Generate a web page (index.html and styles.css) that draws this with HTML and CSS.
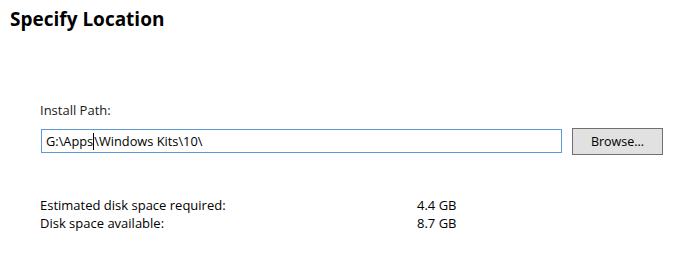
FILE: index.html
```html
<!DOCTYPE html>
<html>
<head>
<meta charset="utf-8">
<link rel="stylesheet" href="styles.css">
</head>
<body>
<div class="page">
  <h1 class="title">Specify Location</h1>
  <div class="content">
    <div class="label">Install Path:</div>
    <div class="path-row">
      <div class="path-input">G:\Apps<span class="caret"></span>\Windows Kits\10\</div>
      <div class="browse">Browse...</div>
    </div>
    <div class="space">
      <div class="space-row"><span class="space-name">Estimated disk space required:</span><span class="space-val">4.4 GB</span></div>
      <div class="space-row"><span class="space-name">Disk space available:</span><span class="space-val">8.7 GB</span></div>
    </div>
  </div>
</div>
</body>
</html>
```
FILE: styles.css
```css
html, body {
  margin: 0;
  padding: 0;
  background: #ffffff;
}
body {
  width: 685px;
  height: 260px;
  overflow: hidden;
  font-family: "Open Sans", "Noto Sans", sans-serif;
  color: #000;
}
.page {
  padding: 6px 0 0 10px;
}
.title {
  margin: 0;
  font-size: 19px;
  font-weight: 700;
  line-height: 26px;
}
.content {
  padding: 0 0 0 30px;
  margin-top: 70px;
}
.label {
  font-size: 13px;
  line-height: 16px;
  color: #1a1a1a;
}
.path-row {
  display: flex;
  align-items: flex-start;
  margin-top: 11px;
  gap: 10px;
}
.path-input {
  margin-left: 1px;
  width: 515px;
  height: 22px;
  border: 1px solid #5a9ad9;
  font-size: 12.8px;
  line-height: 22px;
  padding-left: 4px;
  color: #000;
}
.caret {
  display: inline-block;
  width: 1px;
  height: 17px;
  background: #000;
  vertical-align: -4px;
}
.browse {
  width: 89px;
  height: 25px;
  margin-top: -1px;
  border: 1px solid #707070;
  background: #e1e1e1;
  font-size: 12.5px;
  line-height: 25px;
  text-align: center;
}
.space {
  margin-top: 41px;
}
.space-row {
  display: flex;
  font-size: 13px;
  line-height: 18px;
}
.space-name {
  width: 377px;
}
```
